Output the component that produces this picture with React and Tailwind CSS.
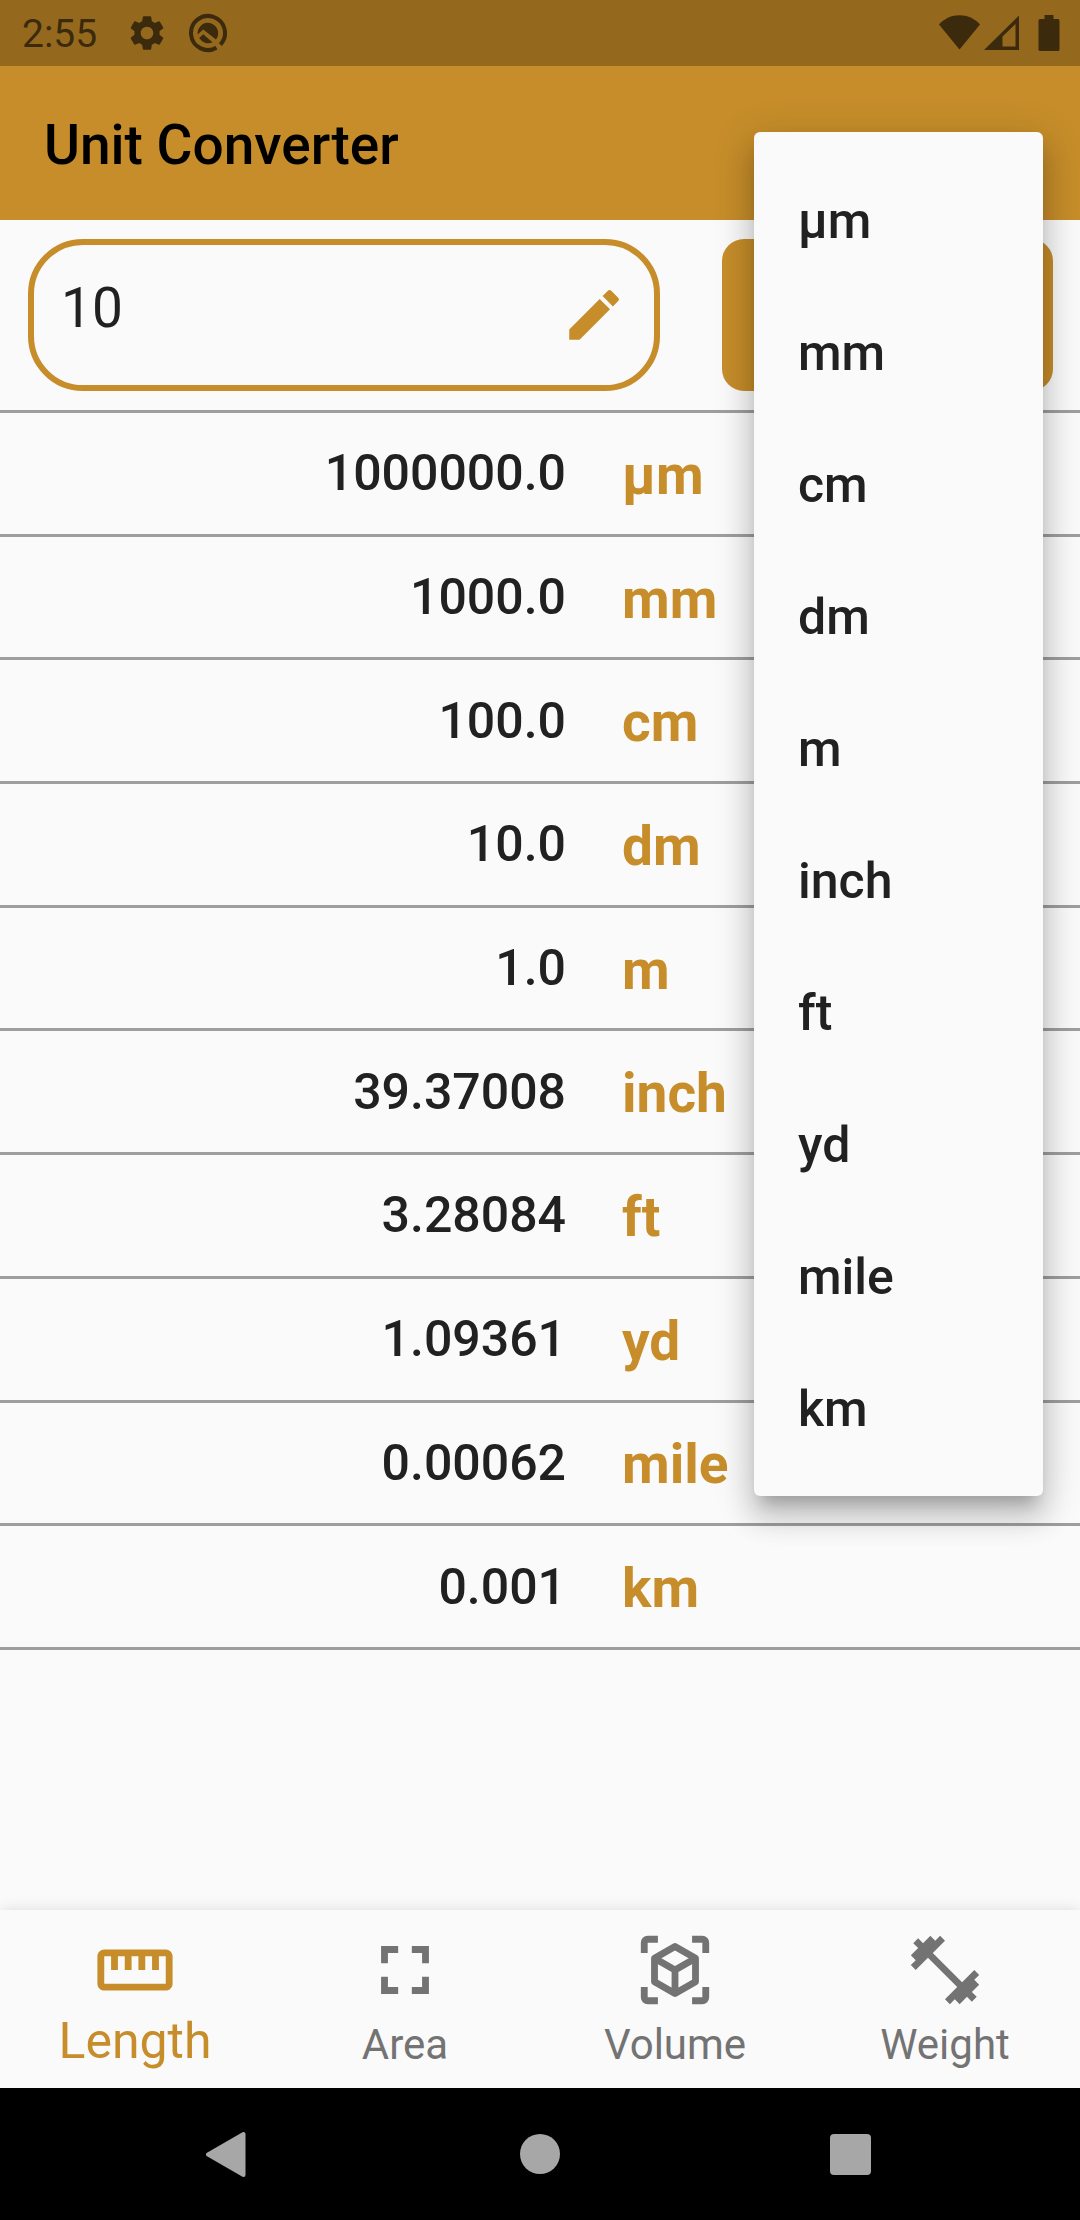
import { MdCreate, MdFullscreen, MdOutlineStraighten, MdFitnessCenter, MdSettings } from "react-icons/md";

const results = [
  ["1000000.0", "µm"],
  ["1000.0", "mm"],
  ["100.0", "cm"],
  ["10.0", "dm"],
  ["1.0", "m"],
  ["39.37008", "inch"],
  ["3.28084", "ft"],
  ["1.09361", "yd"],
  ["0.00062", "mile"],
  ["0.001", "km"],
];

function CubeScanIcon({ className }) {
  return (
    <svg viewBox="0 0 24 24" className={className} fill="none" stroke="currentColor" strokeWidth="2" aria-hidden="true">
      <path d="M3 7V4a1 1 0 0 1 1-1h3M17 3h3a1 1 0 0 1 1 1v3M21 17v3a1 1 0 0 1-1 1h-3M7 21H4a1 1 0 0 1-1-1v-3" />
      <path strokeLinejoin="round" d="M12 5.1 18 8.55v6.9L12 18.9 6 15.45v-6.9zM6 8.55 12 12l6-3.45M12 12v6.9" />
    </svg>
  );
}

function StatusBar() {
  return (
    <div className="flex h-[66px] items-center justify-between bg-[#94691e] pl-[22px] pr-[20px] text-[#3c2a0d]">
      <div className="flex items-center">
        <span className="w-[104px] pt-[2px] text-[39px] leading-none">2:55</span>
        <MdSettings className="size-[42px]" aria-hidden="true" />
        <svg viewBox="0 0 40 40" className="ml-5 size-10" aria-hidden="true">
          <path d="M32.4 31.6A17 17 0 1 0 28.500 34.700" fill="none" stroke="currentColor" strokeWidth="4" />
          <path d="M9.700 21.500A10.300 10.300 0 1 1 28 26.500L15.200 16.600z" fill="currentColor" />
          <path d="M15.200 21.200 24.500 29.200A10.300 10.300 0 0 1 11.200 25z" fill="currentColor" />
        </svg>
      </div>
      <div className="flex items-center">
        <svg viewBox="0 0 41 36" className="h-9 w-[41px]" fill="currentColor" aria-hidden="true">
          <path d="M0 9.5C5.500 3.500 12.500.3 20.500.3S35.500 3.500 41 9.500L20.500 34.500z" />
        </svg>
        <svg viewBox="0 0 35 36" className="ml-1 h-9 w-[35px]" fill="currentColor" fillRule="evenodd" aria-hidden="true">
          <path d="M35 .5V35H0zM31.500 9 18.500 21.500V31.500H31.500z" />
        </svg>
        <svg viewBox="0 0 22 36" className="ml-[19px] h-9 w-[22px]" fill="currentColor" aria-hidden="true">
          <path d="M6.500 0h9v4H20a1.500 1.500 0 0 1 1.500 1.500v29a1.500 1.500 0 0 1-1.500 1.500H2a1.500 1.500 0 0 1-1.500-1.500v-29A1.500 1.500 0 0 1 2 4h4.500z" />
        </svg>
      </div>
    </div>
  );
}

function UnitPicker() {
  return (
    <div className="relative">
      <button
        type="button"
        aria-label="Unit"
        aria-haspopup="listbox"
        aria-expanded="true"
        className="block h-full w-full rounded-[22px] bg-[#c68d2a]"
      />
      <div
        role="listbox"
        aria-label="Unit"
        className="absolute -top-[107px] left-8 right-[10px] z-10 flex flex-col rounded-[6px] bg-[#fafafa] py-[22px] shadow-[0_14px_14px_-8px_rgba(0,0,0,0.2),0_22px_28px_3px_rgba(0,0,0,0.14),0_8px_39px_6px_rgba(0,0,0,0.12)]"
      >
        {results.map(([, unit]) => (
          <button
            key={unit}
            type="button"
            role="option"
            aria-selected={unit === "cm"}
            className="flex h-[132px] items-center px-11 pt-[2px] text-left text-[50px] font-medium leading-none"
          >
            {unit}
          </button>
        ))}
      </div>
    </div>
  );
}

function Tab({ icon, label, active }) {
  return (
    <button
      type="button"
      aria-current={active ? "page" : undefined}
      className={
        active
          ? "flex flex-col items-center pt-[19px] text-[50px] leading-[60px] text-[#c68d2a]"
          : "flex flex-col items-center pt-[19px] text-[42px] leading-[68px] text-[#737373]"
      }
    >
      {icon}
      <span>{label}</span>
    </button>
  );
}

export default function App() {
  return (
    <div className="flex min-h-screen flex-col bg-[#fafafa] font-[Roboto,sans-serif] text-[#212121]">
      <StatusBar />
      <header className="flex h-[154px] items-center bg-[#c68d2a] px-11 pt-1">
        <h1 className="text-[55px] font-medium leading-none text-black">Unit Converter</h1>
      </header>

      <main className="flex-1">
        <div className="grid grid-cols-[minmax(0,632fr)_minmax(0,331fr)] gap-[62px] py-[19px] pl-7 pr-[27px]">
          <label className="flex h-[152px] items-center rounded-[55px] border-[6px] border-[#c68d2a] px-[27px]">
            <input
              aria-label="Value"
              defaultValue="10"
              inputMode="decimal"
              className="h-full min-w-0 flex-1 bg-transparent pb-[14px] text-[55px] outline-none"
            />
            <MdCreate className="size-[66px] shrink-0 text-[#c68d2a]" aria-hidden="true" />
          </label>
          <UnitPicker />
        </div>

        <table className="h-[1240px] w-full table-fixed border-collapse border-t-[3px] border-[#9e9e9e]">
          <tbody>
            {results.map(([value, unit]) => (
              <tr key={unit} className="border-b-[3px] border-[#9e9e9e]">
                <td className="w-[566px] p-0 text-right text-[50px] font-medium leading-none">{value}</td>
                <th scope="row" className="py-0 pl-14 pr-0 pt-1 text-left text-[55px] font-bold leading-none text-[#c68d2a]">
                  {unit}
                </th>
              </tr>
            ))}
          </tbody>
        </table>
      </main>

      <nav className="grid h-[178px] grid-cols-4 bg-[#fafafa] shadow-[0_0_14px_rgba(0,0,0,0.12)]">
        <Tab active label="Length" icon={<MdOutlineStraighten className="size-[82px]" aria-hidden="true" />} />
        <Tab label="Area" icon={<MdFullscreen className="size-[82px]" aria-hidden="true" />} />
        <Tab label="Volume" icon={<CubeScanIcon className="size-[82px]" />} />
        <Tab label="Weight" icon={<MdFitnessCenter className="size-[82px]" aria-hidden="true" />} />
      </nav>

      <div className="relative grid h-[132px] grid-cols-3 bg-black px-[75px] text-[#a7a7a7]">
        <button type="button" aria-label="Back" className="flex items-center justify-center">
          <svg viewBox="0 0 48 48" className="size-12" fill="currentColor" stroke="currentColor" strokeWidth="4" strokeLinejoin="round" aria-hidden="true">
            <path d="M37.500 4v41L2 24.500z" />
          </svg>
        </button>
        <button type="button" aria-label="Home" className="flex items-center justify-center">
          <span className="size-10 rounded-full bg-[#a7a7a7]" />
        </button>
        <button type="button" aria-label="Overview" className="flex items-center justify-center">
          <span className="size-[41px] rounded-[4px] bg-[#a7a7a7]" />
        </button>
      </div>
    </div>
  );
}
